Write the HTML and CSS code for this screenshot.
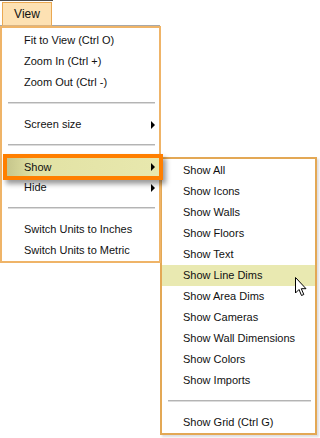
FILE: index.html
```html
<!DOCTYPE html>
<html lang="en">

<head>
  <meta charset="UTF-8">
  <title>View menu</title>
  <link rel="stylesheet" href="styles.css">
</head>

<body>
  <div class="menubar">
    <span class="menu-title">View</span>
  </div>

  <div class="menu main">
    <div class="item">Fit to View (Ctrl O)</div>
    <div class="item">Zoom In (Ctrl +)</div>
    <div class="item">Zoom Out (Ctrl -)</div>
    <div class="sep"></div>
    <div class="item has-sub">Screen size</div>
    <div class="sep"></div>
    <div class="item has-sub active">Show</div>
    <div class="item has-sub">Hide</div>
    <div class="sep"></div>
    <div class="item">Switch Units to Inches</div>
    <div class="item">Switch Units to Metric</div>
  </div>

  <div class="menu sub">
    <div class="item">Show All</div>
    <div class="item">Show Icons</div>
    <div class="item">Show Walls</div>
    <div class="item">Show Floors</div>
    <div class="item">Show Text</div>
    <div class="item hover">Show Line Dims</div>
    <div class="item">Show Area Dims</div>
    <div class="item">Show Cameras</div>
    <div class="item">Show Wall Dimensions</div>
    <div class="item">Show Colors</div>
    <div class="item">Show Imports</div>
    <div class="sep"></div>
    <div class="item">Show Grid (Ctrl G)</div>
  </div>

  <!-- mouse pointer over "Show Line Dims" -->
  <svg class="cursor" width="12" height="20" viewBox="0 0 12 20">
    <path d="M0.5 0.5 L0.5 16 L4 12.5 L6.5 18.5 L8.8 17.5 L6.3 11.7 L11 11.7 Z" fill="#fff" stroke="#000" stroke-width="1" stroke-linejoin="miter" />
  </svg>
</body>

</html>
```

FILE: styles.css
```css
body {
  margin: 0;
  background: #fff;
  font-family: 'Liberation Sans', Arial, sans-serif;
  font-size: 11px;
  color: #111;
  position: relative;
  height: 438px;
  overflow: hidden;
}

.menubar {
  width: 160px;
  height: 26px;
  padding: 2px 0 0 2px;
  box-sizing: border-box;
  border-bottom: 1px solid #a8a8a8;
  background: linear-gradient(#4a4a4a, #4a4a4a) no-repeat 0 0 / 53px 1px;
}

.menu-title {
  display: block;
  width: 48px;
  height: 22px;
  line-height: 22px;
  text-align: center;
  font-size: 12px;
  background: #fde1b3;
  border: 1px solid #eaa851;
  border-bottom-color: #d9b585;
}

.menu {
  background: #fff;
  box-sizing: border-box;
}

.main {
  width: 161px;
  border: 2px solid #efb468;
  padding: 2px 0 0;
  position: relative;
  z-index: 2;
  background: transparent;
}

.sub {
  position: absolute;
  left: 160px;
  top: 157px;
  width: 157px;
  height: 278px;
  border: 2px solid #e3a855;
  padding: 1px 0 0;
  box-shadow: 2px 2px 2px rgba(60, 60, 90, 0.18);
  z-index: 1;
}

.item {
  height: 21px;
  line-height: 21px;
  padding-left: 22px;
  position: relative;
  white-space: nowrap;
}

.sub .item {
  padding-left: 21px;
}

.has-sub::after {
  content: '';
  position: absolute;
  right: 4px;
  top: 7px;
  border-style: solid;
  border-width: 4px 0 4px 4px;
  border-color: transparent transparent transparent #000;
}

.item.active {
  height: 18px;
  line-height: 18px;
  margin: -2px -4px -3px 1px;
  padding-left: 17px;
  border: 4px solid #ff7f00;
  background: linear-gradient(to right, #c6c68c, #e2e2a4 18%, #e8e8ae);
  box-shadow: 3px 4px 5px rgba(0, 0, 0, 0.4);
  z-index: 3;
}

.item.active::after {
  top: 5px;
}

.item.hover {
  background: #e9e9b1;
}

.sep {
  height: 21px;
  position: relative;
}

.sep::before {
  content: '';
  position: absolute;
  left: 6px;
  right: 4px;
  top: 9px;
  height: 1px;
  background: #b4b4b4;
  border-bottom: 1px solid #dcdcdc;
}

.cursor {
  position: absolute;
  left: 295px;
  top: 277px;
  z-index: 4;
}
```
